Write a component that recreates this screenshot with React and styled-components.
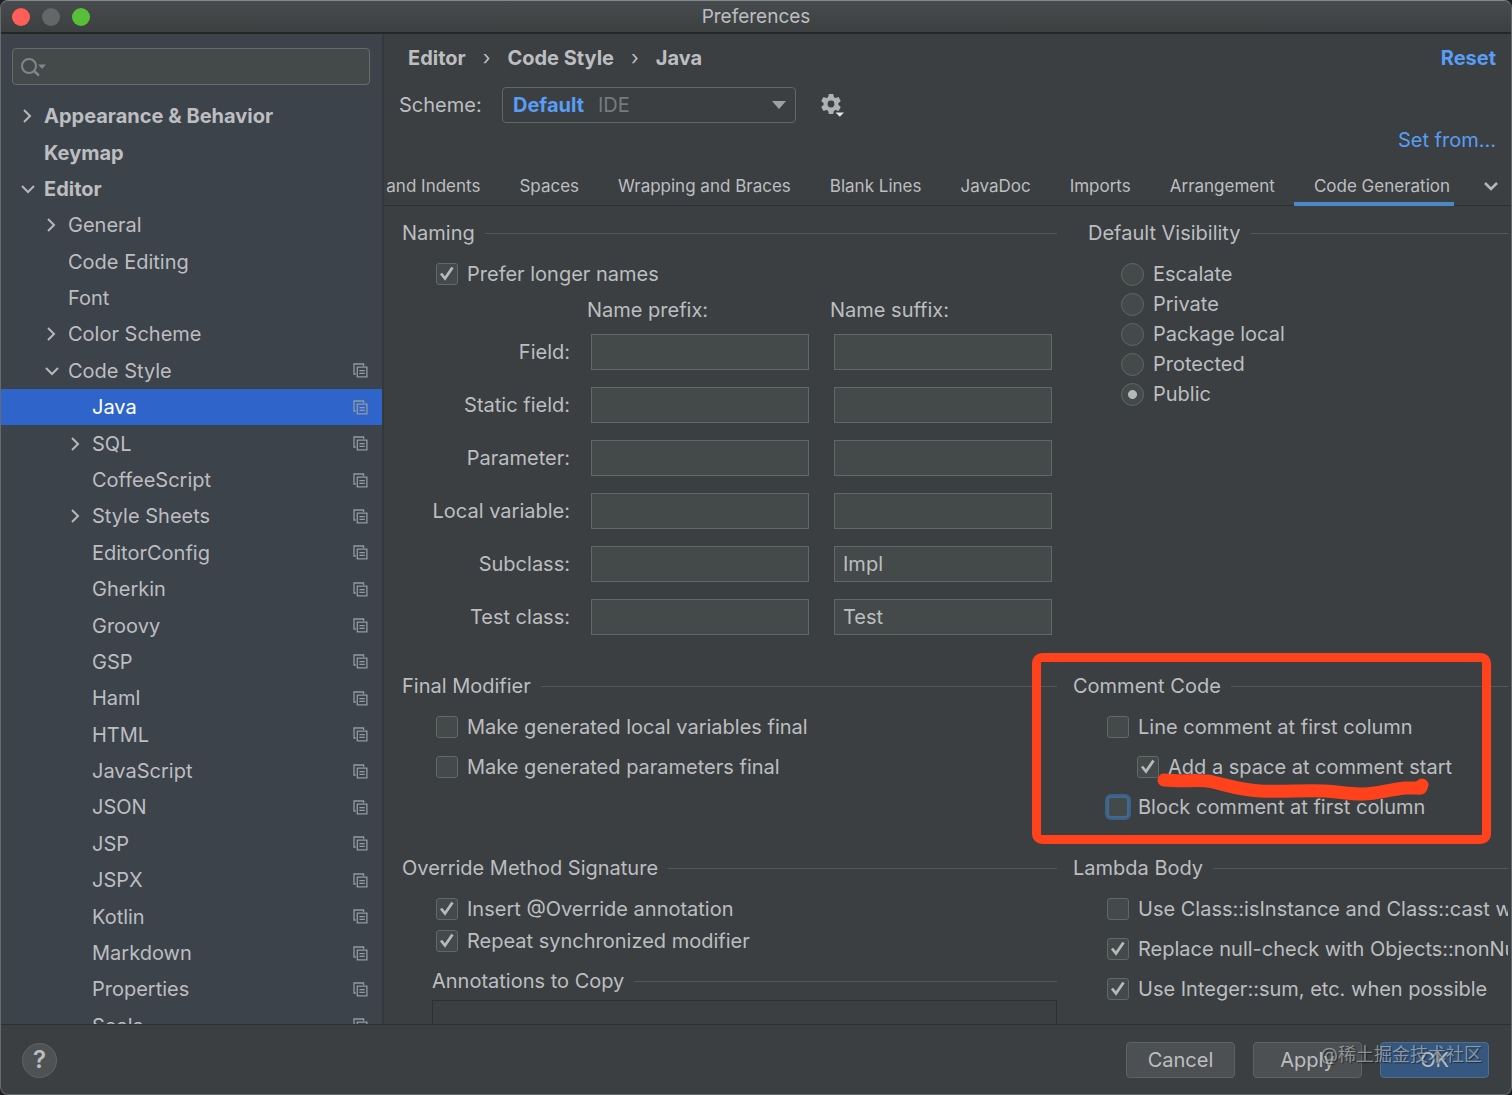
import React from 'react';
import styled, { createGlobalStyle, css } from 'styled-components';

const color = {
  panel: '#3b3f41',
  sidebar: '#3d434b',
  text: '#bcbec0',
  line: '#54585a',
  dark: '#2d3032',
  field: '#434a49',
  fieldBorder: '#626768',
  link: '#589df6',
  mark: '#ff421c',
};

const GlobalStyle = createGlobalStyle`
  *, *::before, *::after { box-sizing: border-box; }
  body { margin: 0; background: #1d1f20; }
  body, button, input, select {
    font-family: Inter, "Noto Sans CJK SC", sans-serif;
    font-size: 20px;
    line-height: 24px;
    color: ${color.text};
  }
  ul, fieldset { margin: 0; padding: 0; border: 0; list-style: none; min-width: 0; }
  svg { display: block; }
`;

const Window = styled.div`
  display: flex;
  flex-direction: column;
  height: 100vh;
  overflow: hidden;
  background: ${color.panel};
  border: 1px solid #666b6d;
  border-top-color: #83888a;
  border-radius: 8px;
`;

const TitleBar = styled.header`
  display: grid;
  grid-template-columns: 1fr auto 1fr;
  align-items: center;
  flex: none;
  height: 33px;
  padding: 1px 11px 0;
  background: linear-gradient(#474b4d, #3c4041);
  border-bottom: 2px solid #242728;
`;

const Title = styled.h1`
  margin: 0;
  font-size: 19px;
  font-weight: 400;
`;

const Lights = styled.div`
  display: flex;
  gap: 12px;
`;

const Light = styled.button`
  width: 18px;
  height: 18px;
  padding: 0;
  border: 0;
  border-radius: 50%;
  background: ${(p) => p.$fill};
`;

const Body = styled.div`
  display: flex;
  flex: 1;
  min-height: 0;
`;

const Sidebar = styled.nav`
  display: flex;
  flex-direction: column;
  flex: none;
  width: 383px;
  padding-top: 14px;
  overflow: hidden;
  background: ${color.sidebar};
  border-right: 2px solid #34383c;
`;

const Search = styled.label`
  display: flex;
  align-items: center;
  flex: none;
  height: 37px;
  margin: 0 12px 13px 11px;
  padding: 0 8px;
  background: #434a49;
  border: 1px solid #666b6d;
  border-radius: 4px;
`;

const SearchInput = styled.input`
  flex: 1;
  min-width: 0;
  border: 0;
  outline: 0;
  background: none;
`;

/* The last row is cut by the footer, as in a scrolled tree. */
const Tree = styled.ul`
  display: grid;
  grid-auto-rows: 1fr;
  flex: 1;
  margin-bottom: -20px;
`;

const TreeRow = styled.li`
  display: flex;
  align-items: center;
  padding-left: ${(p) => 17 + p.$level * 24}px;
  padding-right: 14px;
  font-weight: ${(p) => (p.$level === 0 ? 700 : 400)};
  color: ${(p) => (p.$selected ? '#fff' : color.text)};
  background: ${(p) => (p.$selected ? '#2f65ca' : 'none')};
`;

const Twisty = styled.span`
  display: grid;
  place-items: center;
  width: 20px;
  margin-right: 6px;
`;

const TreeLabel = styled.span`
  flex: 1;
`;

const Main = styled.main`
  display: flex;
  flex-direction: column;
  flex: 1;
  min-width: 0;
  overflow: hidden;
`;

const Crumbs = styled.div`
  display: flex;
  align-items: center;
  gap: 17px;
  padding: 12px 15px 0 24px;
  font-weight: 700;
`;

const CrumbDivider = styled.span`
  font-weight: 400;
`;

const Link = styled.a`
  color: ${color.link};
  text-decoration: none;
  font-weight: ${(p) => (p.$bold ? 700 : 400)};
  margin-left: auto;
`;

const SchemeRow = styled.div`
  display: flex;
  align-items: center;
  padding: 17px 15px 0;
`;

const SchemeLabel = styled.label`
  width: 103px;
`;

const Stack = styled.div`
  display: grid;
  align-items: center;
  > * { grid-area: 1 / 1; }
`;

const SchemeStack = styled(Stack)`
  width: 294px;
  margin-right: 24px;
`;

const SchemeSelect = styled.select`
  appearance: none;
  height: 36px;
  padding: 0 10px;
  color: ${color.link};
  font-weight: 700;
  background: none;
  border: 1px solid ${color.fieldBorder};
  border-radius: 4px;
`;

const SchemeHint = styled.span`
  margin-left: 96px;
  color: #787b7d;
  pointer-events: none;
`;

const SelectArrow = styled.svg`
  justify-self: end;
  margin-right: 10px;
  pointer-events: none;
`;

const IconButton = styled.button`
  display: grid;
  place-items: center;
  padding: 0;
  border: 0;
  background: none;
`;

const SetFromRow = styled.div`
  display: flex;
  padding: 5px 15px 0;
`;

const TabBar = styled.div`
  display: flex;
  flex: none;
  height: 54px;
  border-bottom: 1px solid ${color.dark};
`;

const Tabs = styled.div`
  display: flex;
  justify-content: flex-end;
  flex: 1;
  min-width: 0;
  margin-bottom: -1px;
  overflow: hidden;
`;

const Tab = styled.button`
  flex: none;
  padding: 17px ${(p) => (p.$active ? 4 : 19)}px 0 20px;
  font-size: 17px;
  white-space: nowrap;
  background: none;
  border: 0;
  border-bottom: 4px solid ${(p) => (p.$active ? '#4a88c7' : 'transparent')};
`;

const TabMenu = styled(IconButton)`
  width: 57px;
  padding: 15px 0 0 16px;
`;

const Content = styled.div`
  flex: 1;
  min-height: 0;
  overflow: hidden;
  margin-right: 3px;
  padding: 15px 0 0 18px;
`;

const Columns = styled.div`
  display: flex;
  gap: ${(p) => p.$gap}px;
  margin-bottom: ${(p) => p.$after}px;
`;

const Group = styled.section`
  position: relative;
  flex: ${(p) => p.$grow} 1 0;
  min-width: 0;
`;

const GroupTitle = styled.h2`
  display: flex;
  align-items: center;
  gap: 10px;
  margin: 0;
  font-size: inherit;
  font-weight: 400;
  white-space: nowrap;
  &::after {
    content: '';
    flex: 1;
    height: 1px;
    background: ${color.line};
  }
`;

const Options = styled.div`
  display: flex;
  flex-direction: column;
  gap: ${(p) => p.$gap}px;
  padding: 17px 0 0 ${(p) => p.$indent || 34}px;
`;

const Option = styled.label`
  display: flex;
  align-items: center;
  gap: 9px;
  height: 24px;
  margin-left: ${(p) => (p.$nested ? 30 : 0)}px;
  white-space: nowrap;
`;

const box = css`
  appearance: none;
  margin: 0;
  background: ${color.field};
  border: 1px solid ${color.fieldBorder};
`;

const CheckInput = styled.input`
  ${box}
  width: 22px;
  height: 22px;
  border-radius: 3px;
  ${(p) => p.$focused && 'border: 2px solid #41698f; box-shadow: 0 0 0 2px #3d6185; border-radius: 4px;'}
`;

const Tick = styled.svg`
  pointer-events: none;
`;

const RadioInput = styled.input`
  ${box}
  width: 23px;
  height: 23px;
  border-radius: 50%;
  &:checked {
    background: radial-gradient(circle, #b4b8b8 0 4px, ${color.field} 5px);
  }
`;

const NameTable = styled.div`
  display: grid;
  grid-template-columns: minmax(0, 164fr) minmax(0, 218fr) minmax(0, 218fr);
  column-gap: 25px;
  row-gap: 17px;
  align-items: center;
  padding: 12px 5px 0 0;
`;

const ColumnHead = styled.span`
  margin: 0 0 -5px -4px;
`;

const NameLabel = styled.label`
  justify-self: end;
  margin-right: -4px;
`;

const NameInput = styled.input`
  width: 100%;
  height: 36px;
  padding: 0 8px;
  background: ${color.field};
  border: 1px solid ${color.fieldBorder};
`;

const SubGroup = styled.div`
  padding: 16px 0 0 30px;
`;

const AnnotationList = styled.div`
  height: 120px;
  margin-top: 7px;
  border: 1px solid ${color.dark};
`;

const Highlight = styled.div`
  position: absolute;
  top: -21px;
  right: 17px;
  bottom: -25px;
  left: -41px;
  border: 9px solid ${color.mark};
  border-radius: 10px;
  pointer-events: none;
`;

const Scribble = styled.svg`
  position: absolute;
  top: 96px;
  left: 82px;
  pointer-events: none;
`;

const Footer = styled.footer`
  position: relative;
  display: flex;
  align-items: center;
  gap: 18px;
  flex: none;
  height: 70px;
  padding: 1px 22px 0 21px;
  border-top: 1px solid ${color.dark};
`;

const HelpButton = styled.button`
  width: 35px;
  height: 35px;
  margin-right: auto;
  padding: 0;
  font-size: 24px;
  font-weight: 600;
  background: #4e5254;
  border: 1px solid #606466;
  border-radius: 50%;
`;

const FooterButton = styled.button`
  width: 109px;
  height: 36px;
  padding: 0;
  background: ${(p) => (p.$primary ? '#365880' : '#4c5052')};
  border: 1px solid ${(p) => (p.$primary ? '#4c708c' : '#5e6263')};
  border-radius: 4px;
`;

const Watermark = styled.span`
  position: absolute;
  right: 29px;
  top: 18px;
  font-size: 18px;
  color: rgba(200, 206, 212, 0.6);
  text-shadow: 1px 1px 1px rgba(0, 0, 0, 0.5);
  pointer-events: none;
`;

const tree = [
  ['Appearance & Behavior', 0, 'closed'],
  ['Keymap', 0],
  ['Editor', 0, 'open'],
  ['General', 1, 'closed'],
  ['Code Editing', 1],
  ['Font', 1],
  ['Color Scheme', 1, 'closed'],
  ['Code Style', 1, 'open', true],
  ['Java', 2, '', true],
  ['SQL', 2, 'closed', true],
  ['CoffeeScript', 2, '', true],
  ['Style Sheets', 2, 'closed', true],
  ...['EditorConfig', 'Gherkin', 'Groovy', 'GSP', 'Haml', 'HTML', 'JavaScript', 'JSON', 'JSP', 'JSPX', 'Kotlin', 'Markdown', 'Properties', 'Scala'].map((n) => [n, 2, '', true]),
];

const tabs = ['Tabs and Indents', 'Spaces', 'Wrapping and Braces', 'Blank Lines', 'JavaDoc', 'Imports', 'Arrangement', 'Code Generation'];

const names = [
  ['Field', '', ''],
  ['Static field', '', ''],
  ['Parameter', '', ''],
  ['Local variable', '', ''],
  ['Subclass', '', 'Impl'],
  ['Test class', '', 'Test'],
];

const Arrow = ({ state }) => (
  <svg width="16" height="16" viewBox="0 0 16 16" fill="none" stroke="#b4b8bb" strokeWidth="2">
    {state === 'open' ? <path d="M2 5l6 6 6-6" /> : <path d="M4 2l6 6-6 6" />}
  </svg>
);

const CopyIcon = () => (
  <svg width="15" height="15" viewBox="0 0 15 15" fill="none" stroke="#929ba1" strokeWidth="1.3">
    <path d="M2.8 11H1V1h9.6v2" />
    <path d="M4.3 4.2h9.6v9.6H4.3z" />
    <path d="M6.4 7.6h5.4M6.4 10.4h5.4" />
  </svg>
);

const GearIcon = () => (
  <svg width="26" height="26" viewBox="0 0 26 26">
    <g transform="translate(11 12)" fill="#afb1b3">
      <circle r="5.4" fill="none" stroke="#afb1b3" strokeWidth="4" />
      {[0, 60, 120, 180, 240, 300].map((a) => (
        <path key={a} transform={`rotate(${a})`} d="M-2.200-10h4.400l.9 4h-6.200z" />
      ))}
    </g>
    <path d="M15.500 20.500h8.500l-4.200 4.300z" fill="#e4e6e7" />
  </svg>
);

function Check({ label, checked, nested, focused }) {
  return (
    <Option $nested={nested}>
      <Stack>
        <CheckInput type="checkbox" defaultChecked={checked} $focused={focused} />
        {checked && (
          <Tick width="22" height="22" viewBox="0 0 22 22" fill="none" stroke="#b6babb" strokeWidth="2.8">
            <path d="M5 10.500l4 5 7.500-11" />
          </Tick>
        )}
      </Stack>
      {label}
    </Option>
  );
}

export default function App() {
  return (
    <Window>
      <GlobalStyle />
      <TitleBar>
        <Lights>
          <Light $fill="#ff5f57" aria-label="Close" />
          <Light $fill="#636768" aria-label="Minimize" />
          <Light $fill="#57c038" aria-label="Zoom" />
        </Lights>
        <Title>Preferences</Title>
      </TitleBar>
      <Body>
        <Sidebar>
          <Search>
            <svg width="26" height="22" viewBox="0 0 26 22" fill="none" stroke="#80868a" strokeWidth="2">
              <circle cx="8" cy="10" r="7" />
              <path d="M13 15l5 4.500" strokeWidth="2.500" />
              <path d="M17 8.500h8l-4 4.500z" fill="#80868a" stroke="none" />
            </svg>
            <SearchInput type="text" aria-label="Search settings" />
          </Search>
          <Tree>
            {tree.map(([name, level, state, copy]) => (
              <TreeRow key={name} $level={level} $selected={name === 'Java'}>
                <Twisty>{state && <Arrow state={state} />}</Twisty>
                <TreeLabel>{name}</TreeLabel>
                {copy && <CopyIcon />}
              </TreeRow>
            ))}
          </Tree>
        </Sidebar>
        <Main>
          <Crumbs>
            <span>Editor</span>
            <CrumbDivider>›</CrumbDivider>
            <span>Code Style</span>
            <CrumbDivider>›</CrumbDivider>
            <span>Java</span>
            <Link href="#reset" $bold>Reset</Link>
          </Crumbs>
          <SchemeRow>
            <SchemeLabel htmlFor="scheme">Scheme:</SchemeLabel>
            <SchemeStack>
              <SchemeSelect id="scheme">
                <option>Default</option>
              </SchemeSelect>
              <SchemeHint>IDE</SchemeHint>
              <SelectArrow width="14" height="8" viewBox="0 0 14 8">
                <path d="M0 0h14L7 8z" fill="#9da1a3" />
              </SelectArrow>
            </SchemeStack>
            <IconButton aria-label="Scheme actions">
              <GearIcon />
            </IconButton>
          </SchemeRow>
          <SetFromRow>
            <Link href="#set-from">Set from...</Link>
          </SetFromRow>
          <TabBar>
            <Tabs role="tablist">
              {tabs.map((t) => (
                <Tab key={t} role="tab" $active={t === 'Code Generation'} aria-selected={t === 'Code Generation'}>
                  {t}
                </Tab>
              ))}
            </Tabs>
            <TabMenu aria-label="More tabs">
              <svg width="16" height="16" viewBox="0 0 16 16" fill="none" stroke="#b4b8bb" strokeWidth="2.500">
                <path d="M2 5l6 6 6-6" />
              </svg>
            </TabMenu>
          </TabBar>
          <Content>
            <Columns $gap={31} $after={39}>
              <Group $grow={655}>
                <GroupTitle>Naming</GroupTitle>
                <Options $gap={16}>
                  <Check label="Prefer longer names" checked />
                </Options>
                <NameTable>
                  <span />
                  <ColumnHead>Name prefix:</ColumnHead>
                  <ColumnHead>Name suffix:</ColumnHead>
                  {names.map(([n, prefix, suffix]) => (
                    <React.Fragment key={n}>
                      <NameLabel htmlFor={n}>{n}:</NameLabel>
                      <NameInput id={n} type="text" defaultValue={prefix} />
                      <NameInput type="text" aria-label={`${n} suffix`} defaultValue={suffix} />
                    </React.Fragment>
                  ))}
                </NameTable>
              </Group>
              <Group $grow={420}>
                <GroupTitle>Default Visibility</GroupTitle>
                <Options $gap={6} $indent={33}>
                  {['Escalate', 'Private', 'Package local', 'Protected', 'Public'].map((v) => (
                    <Option key={v}>
                      <RadioInput type="radio" name="visibility" defaultChecked={v === 'Public'} />
                      {v}
                    </Option>
                  ))}
                </Options>
              </Group>
            </Columns>
            <Columns $gap={16} $after={37}>
              <Group $grow={655}>
                <GroupTitle>Final Modifier</GroupTitle>
                <Options $gap={16}>
                  <Check label="Make generated local variables final" />
                  <Check label="Make generated parameters final" />
                </Options>
              </Group>
              <Group $grow={435}>
                <GroupTitle>Comment Code</GroupTitle>
                <Options $gap={16}>
                  <Check label="Line comment at first column" />
                  <Check label="Add a space at comment start" checked nested />
                  <Check label="Block comment at first column" focused />
                </Options>
                <Highlight />
                <Scribble width="276" height="34" viewBox="0 0 276 34" fill="none" stroke={color.mark} strokeLinecap="round" strokeLinejoin="round">
                  <path d="M9 10C30 12 45 9 58 12C75 16 85 20 105 21C130 22 150 20 170 21C185 22 195 24 208 24C222 24 232 20 250 18L266 18" strokeWidth="13" />
                  <path d="M264 18L267 15" strokeWidth="13" />
                </Scribble>
              </Group>
            </Columns>
            <Columns $gap={16} $after={0}>
              <Group $grow={655}>
                <GroupTitle>Override Method Signature</GroupTitle>
                <Options $gap={8}>
                  <Check label="Insert @Override annotation" checked />
                  <Check label="Repeat synchronized modifier" checked />
                </Options>
                <SubGroup>
                  <GroupTitle>Annotations to Copy</GroupTitle>
                  <AnnotationList />
                </SubGroup>
              </Group>
              <Group $grow={435}>
                <GroupTitle>Lambda Body</GroupTitle>
                <Options $gap={16}>
                  <Check label="Use Class::isInstance and Class::cast when possible" />
                  <Check label="Replace null-check with Objects::nonNull or Objects::isNull" checked />
                  <Check label="Use Integer::sum, etc. when possible" checked />
                </Options>
              </Group>
            </Columns>
          </Content>
        </Main>
      </Body>
      <Footer>
        <HelpButton aria-label="Help">?</HelpButton>
        <FooterButton>Cancel</FooterButton>
        <FooterButton>Apply</FooterButton>
        <FooterButton $primary>OK</FooterButton>
        <Watermark>@稀土掘金技术社区</Watermark>
      </Footer>
    </Window>
  );
}
